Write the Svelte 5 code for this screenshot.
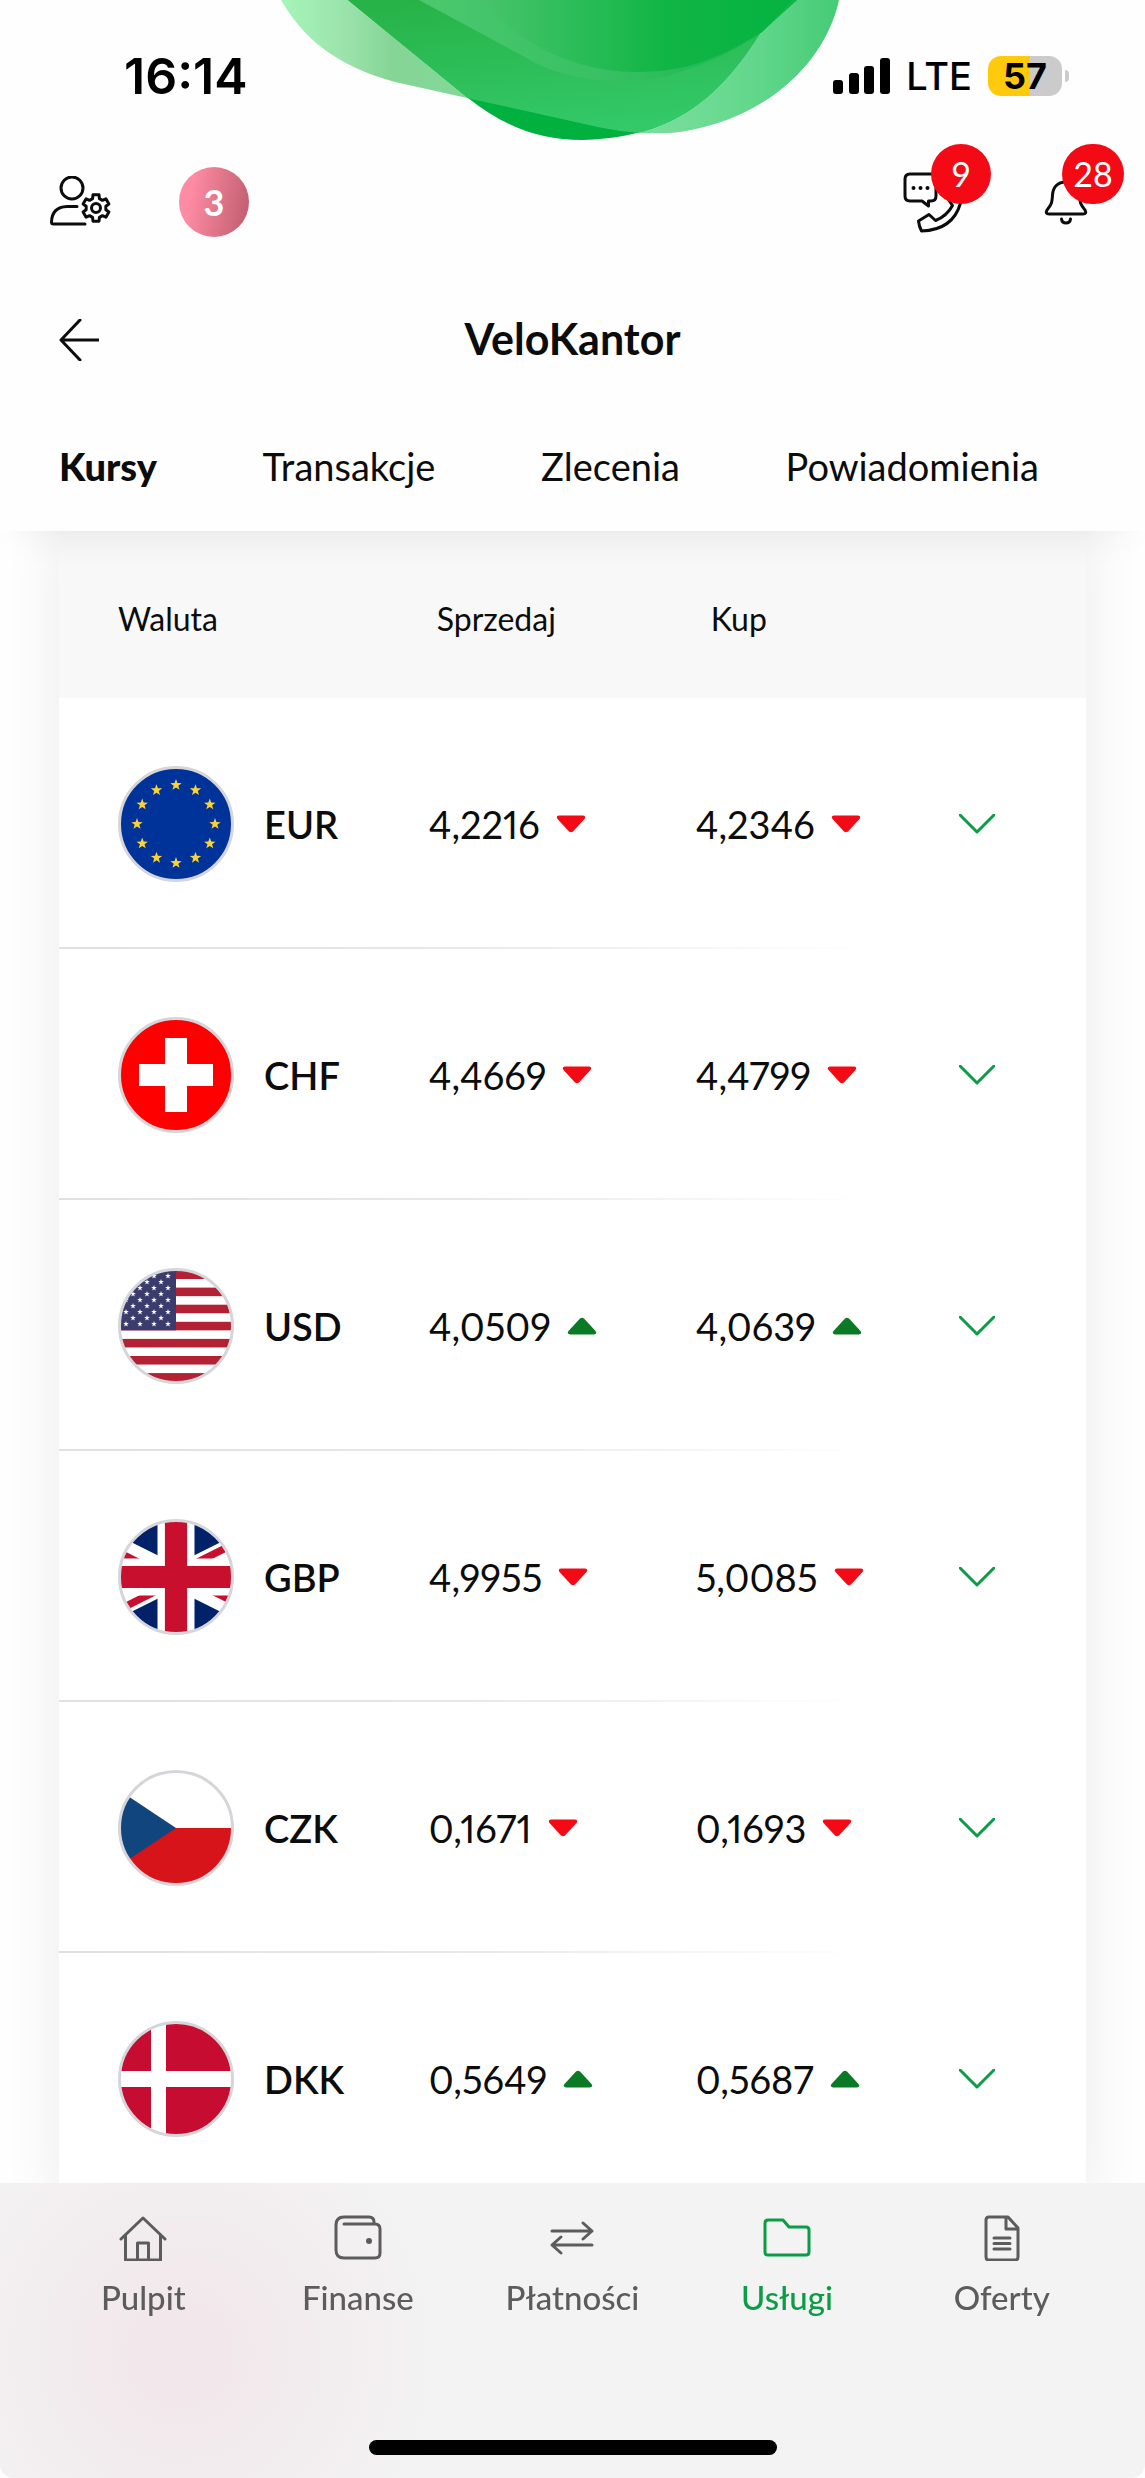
<script lang="ts">
  type Trend = "up" | "down";
  type Rate = { code: string; sell: string; sellTrend: Trend; buy: string; buyTrend: Trend };

  const tabs = ["Kursy", "Transakcje", "Zlecenia", "Powiadomienia"];

  const rates: Rate[] = [
    { code: "EUR", sell: "4,2216", sellTrend: "down", buy: "4,2346", buyTrend: "down" },
    { code: "CHF", sell: "4,4669", sellTrend: "down", buy: "4,4799", buyTrend: "down" },
    { code: "USD", sell: "4,0509", sellTrend: "up", buy: "4,0639", buyTrend: "up" },
    { code: "GBP", sell: "4,9955", sellTrend: "down", buy: "5,0085", buyTrend: "down" },
    { code: "CZK", sell: "0,1671", sellTrend: "down", buy: "0,1693", buyTrend: "down" },
    { code: "DKK", sell: "0,5649", sellTrend: "up", buy: "0,5687", buyTrend: "up" }
  ];

  const navItems = [
    { id: "home", label: "Pulpit" },
    { id: "wallet", label: "Finanse" },
    { id: "transfer", label: "Płatności" },
    { id: "folder", label: "Usługi" },
    { id: "doc", label: "Oferty" }
  ];

  const outerBlob = "M0 0C22 38 55 66 114 82L317 127C350 134 385 135 405 131C490 116 545 60 558 0z";
  const middleBlob = "M67 0L187 98C225 128 260 140 301 140C385 138 435 105 481 30L516 0z";

  let activeTab = $state("Kursy");
  let activeNav = $state("folder");

  function star(cx: number, cy: number, r: number) {
    const points: string[] = [];
    for (let i = 0; i < 10; i++) {
      const radius = i % 2 ? r * 0.4 : r;
      const a = (Math.PI / 5) * i - Math.PI / 2;
      points.push(`${(cx + radius * Math.cos(a)).toFixed(2)},${(cy + radius * Math.sin(a)).toFixed(2)}`);
    }
    return points.join(" ");
  }

  function gear(cx: number, cy: number, inner: number, outer: number) {
    const points: string[] = [];
    for (let i = 0; i < 6; i++) {
      for (const [offset, r] of [[-20, inner], [-13, outer], [13, outer], [20, inner]]) {
        const a = ((i * 60 + offset - 90) * Math.PI) / 180;
        points.push(`${(cx + r * Math.cos(a)).toFixed(2)},${(cy + r * Math.sin(a)).toFixed(2)}`);
      }
    }
    return points.join(" ");
  }

  const euStars = Array.from({ length: 12 }, (_, i) => {
    const a = (Math.PI / 6) * i;
    return star(58 + 39 * Math.sin(a), 58 - 39 * Math.cos(a), 6);
  });

  const usStars: string[] = [];
  for (let row = 0; row < 9; row++) {
    for (let col = row % 2; col < 7; col += 2) {
      usStars.push(star(8 + col * 7, 8 + row * 6, 3));
    }
  }
</script>

{#snippet trend(dir: Trend)}
  <svg class="trend {dir}" viewBox="0 0 30 18" role="img" aria-label={dir === "up" ? "wzrost" : "spadek"}>
    {#if dir === "down"}
      <path d="M3 0.5H27Q30.500 1 28.500 4L17 16.500Q15 18 13 16.500L1.500 4Q-.5 1 3 .5z" />
    {:else}
      <path d="M3 17.500H27Q30.500 17 28.500 14L17 1.500Q15 0 13 1.500L1.500 14Q-.5 17 3 17.500z" />
    {/if}
  </svg>
{/snippet}

{#snippet flag(code: string)}
  <svg class="flag" viewBox="0 0 116 116" aria-hidden="true">
    <clipPath id="clip-{code}"><circle cx="58" cy="58" r="56" /></clipPath>
    <g clip-path="url(#clip-{code})">
      {#if code === "EUR"}
        <rect width="116" height="116" fill="#003399" />
        {#each euStars as points}
          <polygon {points} fill="#fbd334" />
        {/each}
      {:else if code === "CHF"}
        <rect width="116" height="116" fill="#ff0000" />
        <path d="M47 21h22v26h26v22h-26v26h-22v-26h-26v-22h26z" fill="#fff" />
      {:else if code === "USD"}
        <rect width="116" height="116" fill="#fff" />
        {#each [0, 2, 4, 6, 8, 10, 12] as i}
          <rect y={2.5 + i * 8.55} width="116" height="8.55" fill="#b22234" />
        {/each}
        <rect width="58" height="62.3" fill="#3c3b6e" />
        {#each usStars as points}
          <polygon {points} fill="#fff" />
        {/each}
      {:else if code === "GBP"}
        <clipPath id="gb-diagonals"><path d="M30 15h30v15zv15h-30zh-30v-15zv-15h30z" /></clipPath>
        <g transform="translate(-53 2.500) scale(3.700)">
          <path d="M0 -1h60v32H0z" fill="#012169" />
          <path d="M0 0L60 30M60 0L0 30" stroke="#fff" stroke-width="6" />
          <path d="M0 0L60 30M60 0L0 30" clip-path="url(#gb-diagonals)" stroke="#c8102e" stroke-width="4" />
          <path d="M30 -1V31M0 15H60" stroke="#fff" stroke-width="10" />
          <path d="M30 -1V31M0 15H60" stroke="#c8102e" stroke-width="6" />
        </g>
      {:else if code === "CZK"}
        <rect width="116" height="116" fill="#fff" />
        <rect y="58" width="116" height="58" fill="#d7141a" />
        <path d="M58 58L-26 2V114z" fill="#11457e" />
      {:else}
        <rect width="116" height="116" fill="#c60c30" />
        <path d="M33 0h15v50h68v16H48v50H33V66H0V50h33z" fill="#fff" />
      {/if}
    </g>
    <circle cx="58" cy="58" r="56.500" fill="none" stroke="#d5d5da" stroke-width="3" />
  </svg>
{/snippet}

{#snippet navIcon(id: string)}
  <svg class="nav-icon" viewBox="0 0 48 48" aria-hidden="true">
    {#if id === "home"}
      <path d="M2 26L24 5L46 26M6.500 22V47H41.500V22M18.500 47V30H29.500V47" />
    {:else if id === "wallet"}
      <path d="M10 11H41Q46 11 46 16V40Q46 45 41 45H10Q2 45 2 37V12Q2 4 10 4H35Q40 4 40 9V11" />
      <circle class="dot" cx="35" cy="28" r="3" />
    {:else if id === "transfer"}
      <path d="M4 18H44M35 10L44 18L35 26M44 32H4M13 24L4 32L13 40" />
    {:else if id === "folder"}
      <path d="M2 10Q2 7 5 7H20L26 14H43Q46 14 46 17V39Q46 42 43 42H5Q2 42 2 39z" />
    {:else}
      <path d="M11 4H30L40 15V44Q40 47 37 47H11Q8 47 8 44V7Q8 4 11 4zM28 4V16H40M16 25H32M16 30.500H32M16 36H32" />
    {/if}
  </svg>
{/snippet}

<div class="screen">
  <header class="top">
    <svg class="blob" viewBox="0 0 560 142" aria-hidden="true">
      <defs>
        <linearGradient id="outer" x1="0" x2="1">
          <stop offset="0" stop-color="#a6f5bb" />
          <stop offset=".12" stop-color="#9ae2aa" />
          <stop offset=".2" stop-color="#85d596" />
          <stop offset=".65" stop-color="#7bdf9c" />
          <stop offset=".85" stop-color="#62d78c" />
          <stop offset="1" stop-color="#45cb75" />
        </linearGradient>
        <linearGradient id="overlap" x1=".2" x2=".55" y1="0" y2="1">
          <stop offset="0" stop-color="#27b348" />
          <stop offset="1" stop-color="#34ca6b" />
        </linearGradient>
        <linearGradient id="rim" x1="0" x2="1">
          <stop offset="0" stop-color="#4cc86f" />
          <stop offset=".5" stop-color="#37c063" />
          <stop offset="1" stop-color="#10b548" />
        </linearGradient>
        <linearGradient id="core" x1="0" x2="1">
          <stop offset="0" stop-color="#48c46c" />
          <stop offset=".6" stop-color="#10b545" />
          <stop offset="1" stop-color="#05b341" />
        </linearGradient>
        <clipPath id="outer-clip"><path d={outerBlob} /></clipPath>
      </defs>
      <path d={outerBlob} fill="url(#outer)" />
      <path d={middleBlob} fill="#00b140" />
      <path d={middleBlob} fill="url(#overlap)" clip-path="url(#outer-clip)" />
      <path d="M138 0L255 63C285 79 340 86 378 78C425 66 455 50 481 32L516 0z" fill="url(#rim)" />
      <path d="M200 0C238 44 290 70 350 72C405 72 430 62 481 32L512 0z" fill="url(#core)" />
    </svg>

    <div class="status">
      <time>16:14</time>
      <div class="status-right">
        <svg class="signal" viewBox="0 0 57 36" aria-hidden="true">
          <rect x="0" y="22" width="10" height="14" rx="3" />
          <rect x="16" y="15" width="10" height="21" rx="3" />
          <rect x="31" y="8" width="10" height="28" rx="3" />
          <rect x="47" y="0" width="10" height="36" rx="3" />
        </svg>
        <span class="lte">LTE</span>
        <span class="battery">57</span>
      </div>
    </div>

    <div class="toolbar">
      <button type="button" class="icon-button" aria-label="Profil">
        <svg class="profile" viewBox="0 0 62 52" aria-hidden="true">
          <circle cx="22" cy="12" r="11" />
          <path d="M27 30.500H17Q2 31 1.500 46Q1.500 48 3.500 48H35" />
          <polygon points={gear(46, 32, 10, 13.5)} />
          <circle cx="46" cy="32" r="4.500" />
        </svg>
      </button>
      <span class="avatar">3</span>
      <button type="button" class="icon-button contact" aria-label="Kontakt">
        <svg class="chat" viewBox="0 0 62 64" aria-hidden="true">
          <path d="M9 4H30Q35 4 35 9V26Q35 31 30 31H27.500V36L21 31H9Q4 31 4 26V9Q4 4 9 4z" />
          <path d="M17.500 51L28 44.500L34.500 50.500Q46 46 51.500 35.500L47 29L58 22Q60 26 59.500 33Q52 60 20.500 61Q18 56 17.500 51z" />
          <g class="dots"><circle cx="12.500" cy="18" r="2" /><circle cx="19.500" cy="18" r="2" /><circle cx="26.500" cy="18" r="2" /></g>
        </svg>
        <span class="badge">9</span>
      </button>
      <button type="button" class="icon-button alerts" aria-label="Powiadomienia">
        <svg class="bell" viewBox="0 0 46 48" aria-hidden="true">
          <path d="M23 4C14 4 10 10 9.500 17C9 26 8 27 4 32Q2 36 6 36H40Q44 36 42 32C38 27 37 26 36.500 17C36 10 32 4 23 4zM18.500 41Q19 45 23 45Q27 45 27.500 41" />
        </svg>
        <span class="badge">28</span>
      </button>
    </div>

    <div class="title-row">
      <button type="button" class="icon-button" aria-label="Wstecz">
        <svg class="back" viewBox="0 0 40 42" aria-hidden="true">
          <path d="M40 21H2M21 1L2 21L21 41" />
        </svg>
      </button>
      <h1>VeloKantor</h1>
    </div>

    <nav class="tabs" aria-label="VeloKantor">
      {#each tabs as tab (tab)}
        <button type="button" class:active={tab === activeTab} onclick={() => (activeTab = tab)}>{tab}</button>
      {/each}
    </nav>
  </header>

  <main>
    <table>
      <colgroup>
        <col class="col-currency" />
        <col class="col-rate" />
        <col class="col-rate" />
        <col />
      </colgroup>
      <thead>
        <tr>
          <th scope="col">Waluta</th>
          <th scope="col" class="sell">Sprzedaj</th>
          <th scope="col" class="buy">Kup</th>
          <td></td>
        </tr>
      </thead>
      <tbody>
        {#each rates as rate (rate.code)}
          <tr>
            <th scope="row">
              <div class="currency">
                {@render flag(rate.code)}
                {rate.code}
              </div>
            </th>
            <td><div class="rate">{rate.sell}{@render trend(rate.sellTrend)}</div></td>
            <td><div class="rate">{rate.buy}{@render trend(rate.buyTrend)}</div></td>
            <td>
              <button type="button" class="icon-button expand" aria-label="Rozwiń {rate.code}">
                <svg class="chevron" viewBox="0 0 36 20" aria-hidden="true"><path d="M1 1L18 18L35 1" /></svg>
              </button>
            </td>
          </tr>
        {/each}
      </tbody>
    </table>
  </main>

  <nav class="bottom" aria-label="Menu główne">
    <div class="nav-items">
      {#each navItems as item (item.id)}
        <button type="button" class:active={item.id === activeNav} onclick={() => (activeNav = item.id)}>
          {@render navIcon(item.id)}
          {item.label}
        </button>
      {/each}
    </div>
    <div class="home-indicator"></div>
  </nav>
</div>

<style>
  :global(body) {
    background: #fefefe;
  }

  .screen {
    min-height: 100vh;
    box-sizing: border-box;
    padding-bottom: 240px;
    overflow: hidden;
    color: #0c0c0c;
    font-family: Lato, "Open Sans", sans-serif;
    font-size: 38px;
  }

  button {
    padding: 0;
    border: 0;
    background: none;
    color: inherit;
    font: inherit;
    cursor: pointer;
  }

  svg {
    display: block;
    flex: none;
  }

  .top {
    position: relative;
    z-index: 1;
    background: #fefefe;
    box-shadow: 0 24px 40px -24px rgba(0, 0, 0, 0.09);
  }

  .blob {
    position: absolute;
    top: 0;
    left: 50%;
    width: 560px;
    margin-left: -292px;
  }

  .status {
    position: relative;
    display: flex;
    align-items: center;
    justify-content: space-between;
    height: 152px;
    padding: 0 83px 0 124px;
    font-family: Inter, sans-serif;
    color: #000;
  }

  .status time {
    font-size: 50px;
    font-weight: 600;
  }

  .status-right {
    display: flex;
    align-items: center;
    gap: 16px;
  }

  .signal {
    width: 57px;
  }

  .lte {
    font-size: 38px;
    font-weight: 500;
  }

  .battery {
    position: relative;
    width: 74px;
    border-radius: 13px;
    background: linear-gradient(90deg, #ffc90c 57%, #cbcbcb 57%);
    font-size: 36px;
    font-weight: 700;
    line-height: 40px;
    text-align: center;
  }

  .battery::after {
    content: "";
    position: absolute;
    top: 14px;
    right: -7px;
    width: 4px;
    height: 12px;
    border-radius: 0 4px 4px 0;
    background: #cbcbcb;
  }

  .toolbar {
    display: flex;
    align-items: center;
    height: 100px;
    padding: 0 56px 0 50px;
  }

  .icon-button {
    position: relative;
    display: block;
  }

  .profile,
  .chat,
  .bell,
  .back,
  .chevron,
  .nav-icon {
    fill: none;
    stroke: currentColor;
    stroke-width: 3;
    stroke-linecap: round;
    stroke-linejoin: round;
  }

  .profile {
    width: 62px;
  }

  .avatar {
    width: 70px;
    margin-left: 67px;
    border-radius: 50%;
    background: linear-gradient(100deg, #fd8ba3 20%, #bd5c6c);
    color: #fff;
    font-size: 36px;
    font-weight: 700;
    line-height: 70px;
    text-align: center;
  }

  .contact {
    margin-left: auto;
  }

  .chat {
    width: 62px;
  }

  .dots {
    fill: currentColor;
    stroke: none;
  }

  .alerts {
    margin-left: 80px;
  }

  .bell {
    width: 46px;
  }

  .badge {
    position: absolute;
    left: 30px;
    bottom: 30px;
    width: 60px;
    border-radius: 30px;
    background: #f40a15;
    color: #fff;
    font-size: 34px;
    line-height: 60px;
    text-align: center;
  }

  .alerts .badge {
    left: 19px;
    bottom: 22px;
    width: 62px;
  }

  .title-row {
    display: grid;
    grid-template-columns: 40px 1fr 40px;
    align-items: center;
    height: 176px;
    padding: 0 59px;
  }

  .back {
    width: 40px;
  }

  h1 {
    margin: 0;
    padding-bottom: 4px;
    font-size: 43px;
    font-weight: 700;
    text-align: center;
  }

  .tabs {
    display: flex;
    justify-content: space-between;
    height: 103px;
    padding: 0 106px 0 59px;
  }

  .tabs button {
    align-self: flex-start;
    line-height: 76px;
  }

  .tabs .active {
    font-weight: 900;
  }

  main {
    margin: 0 59px;
    background: #fff;
    box-shadow: 0 0 56px rgba(0, 0, 0, 0.08);
  }

  table {
    width: 100%;
    table-layout: fixed;
    border-collapse: collapse;
    text-align: left;
  }

  .col-currency {
    width: 36%;
  }

  .col-rate {
    width: 26%;
  }

  th,
  td {
    padding: 0;
  }

  thead tr {
    height: 167px;
    background: #f8f8f8;
  }

  thead th {
    padding-top: 8px;
    font-size: 32px;
    font-weight: 400;
  }

  th:first-child {
    padding-left: 59px;
  }

  thead .sell {
    padding-left: 8px;
  }

  thead .buy {
    padding-left: 15px;
  }

  tbody tr {
    height: 251px;
    background: linear-gradient(90deg, #e0e0e0, #e8e8e8 40%, transparent 78%) bottom / 100% 2px no-repeat;
  }

  tbody th {
    font-weight: 600;
  }

  .currency {
    display: flex;
    align-items: center;
    gap: 30px;
  }

  .flag {
    width: 116px;
  }

  .rate {
    display: flex;
    align-items: center;
    gap: 16px;
    font-variant-numeric: proportional-nums;
  }

  .trend {
    width: 30px;
  }

  .up {
    fill: #0b7a24;
  }

  .down {
    fill: #f40a15;
  }

  .expand {
    margin-left: -4px;
    color: #0b9c46;
  }

  .chevron {
    width: 36px;
  }

  .bottom {
    position: fixed;
    z-index: 2;
    right: 0;
    bottom: 0;
    left: 0;
    box-sizing: border-box;
    height: 295px;
    padding: 30px 36px 0;
    border-radius: 0 0 14px 14px;
    background: radial-gradient(circle at 180px 170px, #f2e6ea, #f2ecee 130px, #f3f3f3 260px);
  }

  .nav-items {
    display: grid;
    grid-template-columns: repeat(5, 1fr);
  }

  .nav-items button {
    display: flex;
    flex-direction: column;
    align-items: center;
    gap: 16px;
    color: #5c5c5c;
    font-size: 33px;
    font-weight: 500;
    line-height: 40px;
  }

  .nav-items .active {
    color: #0b9c46;
  }

  .nav-icon {
    width: 48px;
  }

  .dot {
    fill: currentColor;
    stroke: none;
  }

  .home-indicator {
    position: absolute;
    bottom: 23px;
    left: 50%;
    width: 408px;
    height: 15px;
    margin-left: -204px;
    border-radius: 8px;
    background: #000;
  }
</style>
